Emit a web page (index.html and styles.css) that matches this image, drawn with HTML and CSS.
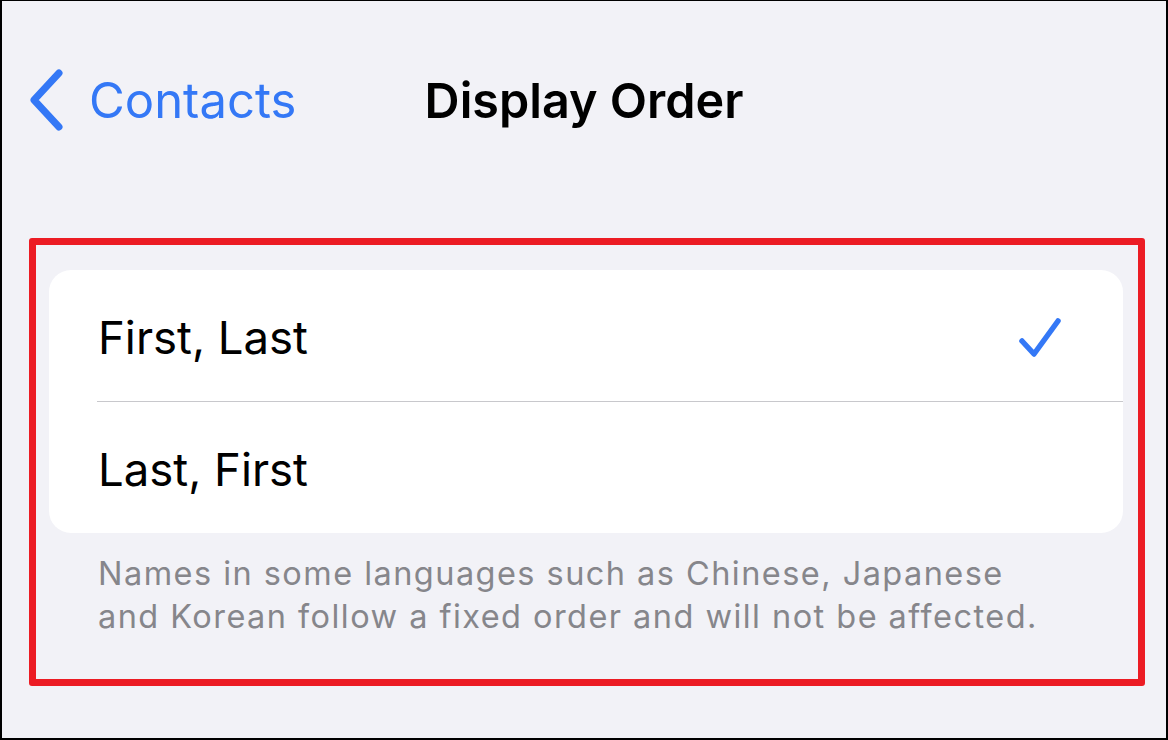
FILE: index.html
```html
<!DOCTYPE html>
<html>
<head>
<meta charset="utf-8">
<link rel="stylesheet" href="styles.css">
</head>
<body>
<div class="frame">
  <header class="nav">
    <div class="back">
      <svg class="chev" width="40" height="62" viewBox="0 0 40 62"><path d="M32 4 L7 31 L32 58" fill="none" stroke="#3478f6" stroke-width="7" stroke-linecap="round" stroke-linejoin="round"/></svg>
      <span class="back-label">Contacts</span>
    </div>
    <h1 class="title">Display Order</h1>
  </header>
  <section class="highlight">
    <div class="card">
      <div class="row">
        <span class="row-label">First, Last</span>
        <svg class="check" width="46" height="46" viewBox="0 0 46 46"><path d="M5 27 L17 40 L41 7" fill="none" stroke="#3478f6" stroke-width="5.5" stroke-linecap="round" stroke-linejoin="round"/></svg>
      </div>
      <div class="sep"></div>
      <div class="row">
        <span class="row-label">Last, First</span>
      </div>
    </div>
    <p class="footer">Names in some languages such as Chinese, Japanese and Korean follow a fixed order and will not be affected.</p>
  </section>
</div>
</body>
</html>
```
FILE: styles.css
```css
* { box-sizing: border-box; }
html, body { margin: 0; padding: 0; }
body { font-family: Inter, "Noto Sans", sans-serif; }
.frame {
  width: 1168px;
  height: 740px;
  background: #f2f2f7;
  border-style: solid;
  border-color: #000;
  border-width: 1px 2px 2px 2px;
  overflow: hidden;
}
.nav {
  position: relative;
  height: 237px;
  padding-top: 68px;
}
.back {
  display: flex;
  align-items: center;
  margin-left: 25px;
  gap: 22px;
  height: 62px;
}
.back-label {
  font-size: 49px;
  color: #3478f6;
}
.title {
  position: absolute;
  left: 0;
  right: 0;
  top: 69px;
  margin: 0;
  height: 62px;
  line-height: 62px;
  text-align: center;
  font-size: 48.5px;
  font-weight: 600;
  color: #000;
}
.highlight {
  margin-left: 27px;
  width: 1116px;
  height: 448px;
  border: 7px solid #ec1c24;
  border-radius: 3px;
  padding: 25px 15px 0 13px;
}
.card {
  background: #fff;
  border-radius: 22px;
}
.row {
  height: 131px;
  display: flex;
  align-items: center;
  justify-content: space-between;
  padding: 4px 60px 0 49px;
}
.row-label {
  font-size: 45.5px;
  color: #000;
}
.check { margin-top: -2px; }
.sep {
  height: 1px;
  background: #c8c8cc;
  margin-left: 48px;
}
.footer {
  width: 960px;
  margin: 19px 0 0 49px;
  font-size: 32.5px;
  line-height: 43px;
  letter-spacing: 1.45px;
  color: #86868b;
}
```
